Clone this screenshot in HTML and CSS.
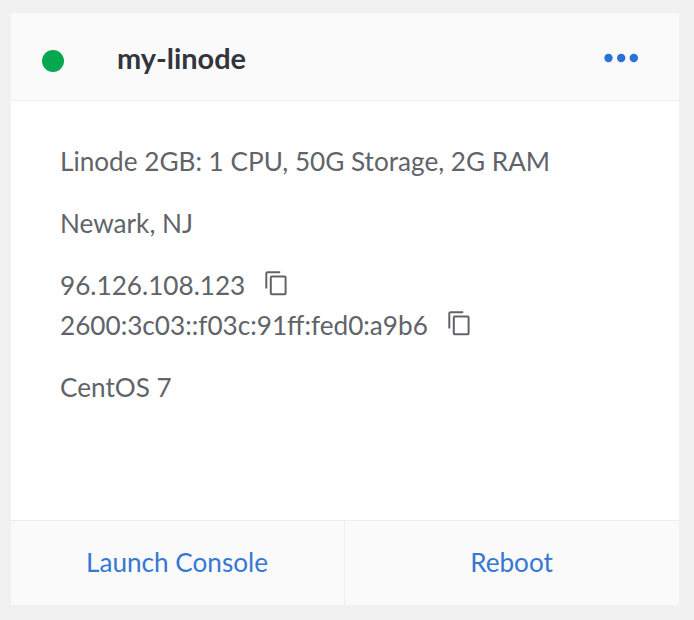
FILE: index.html
```html
<!DOCTYPE html>
<html lang="en">
<head>
<meta charset="utf-8">
<title>my-linode</title>
<link rel="stylesheet" href="styles.css">
</head>
<body>
<article class="card">
  <header class="card-header">
    <span class="status"></span>
    <h1 class="title">my-linode</h1>
    <button class="menu" aria-label="Actions"><svg width="34" height="10" viewBox="0 0 34 10"><circle cx="4.5" cy="5" r="4.2"/><circle cx="17.2" cy="5" r="4.2"/><circle cx="29.8" cy="5" r="4.2"/></svg></button>
  </header>
  <section class="details">
    <p class="plan">Linode 2GB: 1 CPU, 50G Storage, 2G RAM</p>
    <p class="region">Newark, NJ</p>
    <div class="ips">
      <div class="ip"><span class="ipv4">96.126.108.123</span><svg class="copy" width="22" height="25" viewBox="0 0 22 25"><path d="M1.3 17.5V2.5q0-1.2 1.2-1.2h12.7"/><rect x="5.8" y="5.6" width="14.8" height="17.6" rx="1"/></svg></div>
      <div class="ip"><span class="ipv6">2600:3c03::f03c:91ff:fed0:a9b6</span><svg class="copy" width="22" height="25" viewBox="0 0 22 25"><path d="M1.3 17.5V2.5q0-1.2 1.2-1.2h12.7"/><rect x="5.8" y="5.6" width="14.8" height="17.6" rx="1"/></svg></div>
    </div>
    <p class="image">CentOS 7</p>
  </section>
  <footer class="actions">
    <button class="action launch">Launch Console</button>
    <button class="action reboot">Reboot</button>
  </footer>
</article>
</body>
</html>
```
FILE: styles.css
```css
* { box-sizing: border-box; }
body { margin: 0; padding: 13px 15px 15px 11px; background: #f1f1f1; font-family: Lato, sans-serif; color: #606469; }
p, h1 { margin: 0; }
button { padding: 0; border: 0; background: none; font: inherit; }
svg { display: block; }
.card { display: flex; flex-direction: column; height: 592px; background: #fff; }
.card-header { display: flex; align-items: center; height: 88px; padding: 3px 41px 0 31px; background: #fafafa; border-bottom: 1px solid #eee; }
.status { width: 22px; height: 22px; margin-top: 6px; border-radius: 50%; background: #05a84f; }
.title { margin-left: 53px; margin-bottom: 1px; font-size: 28.9px; line-height: 40px; font-weight: 700; color: #32363c; }
.menu { margin-left: auto; fill: #2a70d9; }
.details { flex: 1; padding: 39.5px 49px 0; font-size: 26.15px; line-height: 40px; white-space: nowrap; }
.region, .ips, .image { margin-top: 22px; }
.ip { display: flex; height: 40px; }
.copy { margin: 6px 0 0 20px; fill: none; stroke: #606469; stroke-width: 2; }
.actions { display: flex; height: 85px; background: #fafafa; border-top: 1px solid #eee; }
.action { width: 334px; padding: 0 1px 3px 0; color: #3578d4; font-size: 26.15px; }
.launch { border-right: 1px solid #eee; }
```
